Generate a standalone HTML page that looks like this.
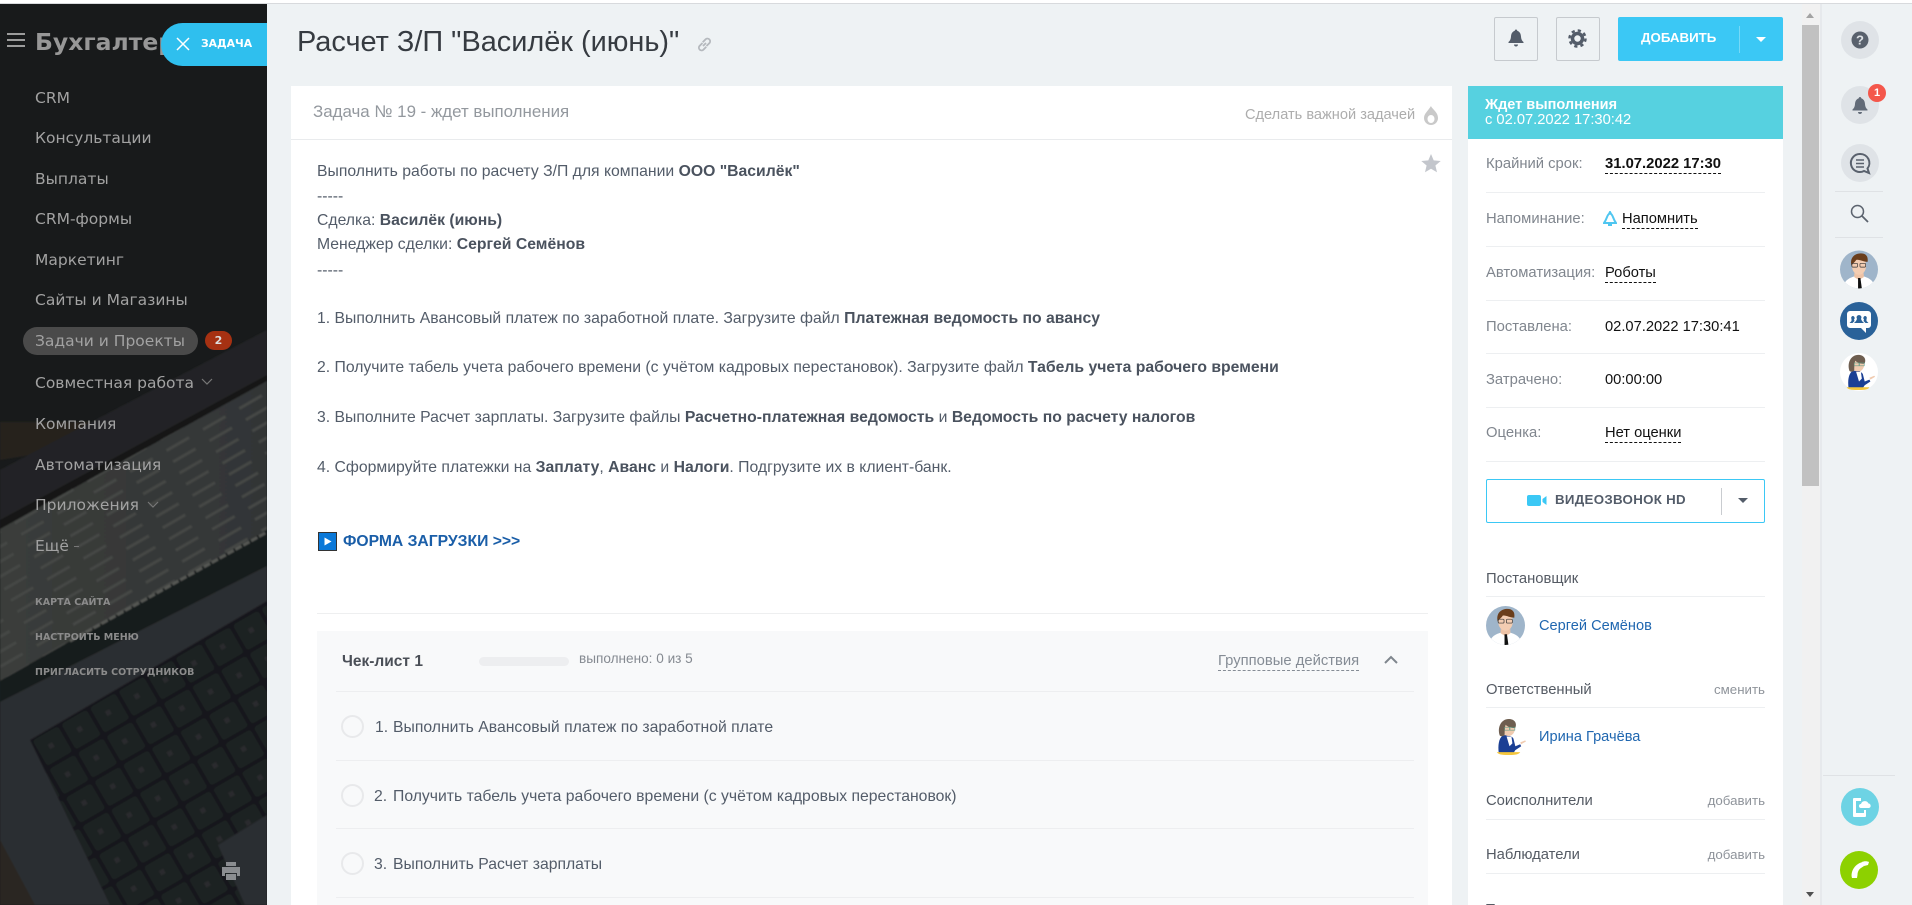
<!DOCTYPE html>
<html lang="ru"><head><meta charset="utf-8"><title>Расчет З/П</title>
<style>
html,body{margin:0;padding:0;width:1912px;height:905px;overflow:hidden;background:#fff}
body{font-family:"Liberation Sans","Noto Sans CJK SC",sans-serif;position:relative}
div,span.t,svg.a{position:absolute}
.t{position:absolute;white-space:nowrap;line-height:1.2}
.m{font-family:"DejaVu Sans",sans-serif;font-size:15.5px;color:#a2a2a2;left:35px;height:18px;line-height:18px}
.s{font-family:"DejaVu Sans",sans-serif;font-size:9.5px;font-weight:bold;color:#8b8b8b;left:35px;height:12px;line-height:12px}
.b{font-size:15.75px;color:#535c69;left:317px;height:18px;line-height:18px}
.b b{color:#4a525e}
.l{font-size:14.8px;color:#80868e;left:1486px;height:18px;line-height:18px}
.v{font-size:14.7px;color:#111;left:1604px;height:18px;line-height:18px}
.u{border-bottom:1px dashed #111;line-height:16px;height:17px}
.h{height:1px;background:#edeff1;left:1486px;width:279px}
.n{font-size:14.8px;color:#555b64;left:1486px;height:18px;line-height:18px}
.r{font-size:13.3px;color:#8f949b;right:147px;height:18px;line-height:18px}
.lnk{font-size:14.6px;color:#2067b0;height:18px;line-height:18px}
.ci{width:38px;height:38px;border-radius:50%;background:#dfe3e7}
.ck{font-size:15.75px;color:#535c69;height:18px;line-height:18px}
.ck span{display:inline-block;width:18px}
.cc{width:19px;height:19px;border-radius:50%;border:2px solid #e8e9eb;background:#f8f9fa;left:341px}
.ch{height:1px;background:#edeef0;left:336px;width:1078px}
</style></head><body>
<svg width="0" height="0" style="position:absolute"><defs>
<symbol id="man" viewBox="0 0 40 40">
<clipPath id="cm"><circle cx="20" cy="20" r="20"/></clipPath>
<g clip-path="url(#cm)"><rect width="40" height="40" fill="#9fb5ca"/>
<path d="M3 40c1-8 6-11 13-13h8c7 2 12 5 13 13z" fill="#fff"/>
<path d="M15 24h10v4l-5 3-5-3z" fill="#eec3a6"/>
<ellipse cx="20" cy="16" rx="7.500" ry="9.500" fill="#f3cdb2"/>
<path d="M12 16c-2-9 4-13 10-13 5 0 8 3 7 9-5 0-9-3-12-2-1 2-3 3-5 6z" fill="#6a3e1c"/>
<rect x="12.500" y="13.500" width="6" height="4" rx="1" fill="none" stroke="#333" stroke-width=".7"/><rect x="21" y="13.500" width="6" height="4" rx="1" fill="none" stroke="#333" stroke-width=".7"/>
<path d="M19 29h2.500l1.500 11h-4z" fill="#111"/></g></symbol>
<symbol id="wom" viewBox="0 0 40 40">
<circle cx="20" cy="20" r="20" fill="#fff"/>
<path d="M9 37c-1-8 0-15 4-18 4-1 9 0 11 3l2 8 5-2 1 2-6 4-2 3z" fill="#1b3f94"/>
<path d="M17 20l5 0 1 7-3 3z" fill="#fff"/>
<ellipse cx="19" cy="12" rx="6.500" ry="7.500" fill="#f0cbb0"/>
<path d="M10 19c-3-9 2-17 9-17 6 0 9 4 7 9-4 1-8-1-10-3-1 3-1 7-1 11-2 1-4 1-5 0z" fill="#6e5e50"/>
<rect x="15" y="10.500" width="5" height="3" fill="none" stroke="#5a9a86" stroke-width=".6"/><rect x="20.500" y="10.500" width="5" height="3" fill="none" stroke="#5a9a86" stroke-width=".6"/>
<path d="M7 36h24c-1 2-4 3-12 3s-11-1-12-3z" fill="#f4c63d"/>
<path d="M31 26l5-2 1 1-5 3z" fill="#f0cbb0"/></symbol>
<symbol id="bell" viewBox="0 0 20 20"><path d="M10 1.500c.8 0 1.200.5 1.200 1.300 2.500.8 3.600 3 3.800 5.700.2 2.800 1 4.300 2.500 5.500v1H2.500v-1C4 12.800 4.800 11.300 5 8.500c.2-2.700 1.300-4.900 3.800-5.700 0-.8.400-1.300 1.200-1.300zM8 16.500h4c0 1.200-.9 2-2 2s-2-.8-2-2z"/></symbol>
<pattern id="keys" width="33" height="33" patternUnits="userSpaceOnUse" patternTransform="translate(30 740) rotate(-30)"><rect width="33" height="33" fill="#16171a"/><rect x="2" y="2" width="29" height="29" rx="3" fill="#1f2124"/><rect x="13" y="13" width="5" height="5" fill="#292b2d"/></pattern>
<pattern id="cells" width="42" height="13" patternUnits="userSpaceOnUse" patternTransform="rotate(-30)"><rect x="3" y="4" width="26" height="3" fill="#444644"/></pattern>
<linearGradient id="sh" x1="0" x2="1" y1="0" y2="0"><stop offset="0" stop-color="#3a3c3a"/><stop offset="1" stop-color="#323536"/></linearGradient>
<filter id="bl"><feGaussianBlur stdDeviation=".9"/></filter>
</defs></svg>

<!-- page bg -->
<div style="left:0;top:0;width:1912px;height:3px;background:#fff"></div>
<div style="left:0;top:3px;width:1912px;height:1px;background:#d8dadd"></div>
<div style="left:267px;top:4px;width:1645px;height:901px;background:#eef2f4"></div>

<!-- sidebar -->
<svg class="a" style="left:0;top:4px;overflow:hidden" width="267" height="901" viewBox="0 4 267 901">
<rect x="0" y="0" width="267" height="905" fill="#181a1b"/>
<g filter="url(#bl)">
<polygon points="0,422 110,422 110,442 0,460" fill="#25211e"/>
<polygon points="0,470 267,330 267,375 0,520" fill="#222425"/>
<polygon points="0,520 267,375 267,381 0,529" fill="#131415"/>
<polygon points="0,529 267,381 267,530 0,681" fill="url(#sh)"/>
<polygon points="0,529 267,381 267,530 0,681" fill="url(#cells)"/>
<polygon points="0,681 267,530 267,566 0,702" fill="#191a1b"/>
<line x1="70" y1="641" x2="267" y2="532" stroke="#545653" stroke-width="3" stroke-dasharray="7 2"/>
<polygon points="0,702 267,566 267,905 0,905" fill="#2a2d30"/>
<polygon points="30,740 267,601 267,905 110,905" fill="url(#keys)"/>
<polygon points="267,815 218,845 245,905 267,905" fill="#2a2d30"/>
<polygon points="0,840 35,905 0,905" fill="#2c2622"/>
</g>
</svg>
<div class="t" style="left:35px;top:24px;font-family:'DejaVu Sans',sans-serif;font-weight:bold;font-size:23.500px;color:#979797;line-height:36px">Бухгалтер 24</div>
<div style="left:7px;top:33px;width:18px;height:2px;background:#9c9c9c"></div>
<div style="left:7px;top:39px;width:18px;height:2px;background:#9c9c9c"></div>
<div style="left:7px;top:45px;width:18px;height:2px;background:#9c9c9c"></div>
<div style="left:161px;top:23px;width:106px;height:43px;background:#2fbfee;border-radius:22px 0 0 22px"></div>
<svg class="a" style="left:176px;top:37px" width="14" height="14"><path d="M1 1l12 12M13 1L1 13" stroke="#fff" stroke-width="1.500"/></svg>
<div class="t" style="left:201px;top:36px;font-family:'DejaVu Sans',sans-serif;font-size:10.800px;font-weight:bold;color:#fff;line-height:16px">ЗАДАЧА</div>
<div class="t m" style="top:89px">CRM</div>
<div class="t m" style="top:129px">Консультации</div>
<div class="t m" style="top:170px">Выплаты</div>
<div class="t m" style="top:210px">CRM-формы</div>
<div class="t m" style="top:251px">Маркетинг</div>
<div class="t m" style="top:291px">Сайты и Магазины</div>
<div style="left:23px;top:327px;width:175px;height:28px;border-radius:14px;background:#4a4a4a"></div>
<div class="t m" style="top:332px">Задачи и Проекты</div>
<div class="t" style="left:205px;top:331px;width:27px;height:19px;border-radius:10px;background:#a63112;color:#dcdcdc;font-family:'DejaVu Sans',sans-serif;font-weight:bold;font-size:11px;line-height:19px;text-align:center">2</div>
<div class="t m" style="top:374px">Совместная работа</div>
<svg class="a" style="left:201px;top:378px" width="12" height="8"><path d="M1 1l5 5 5-5" fill="none" stroke="#777" stroke-width="1.200"/></svg>
<div class="t m" style="top:415px">Компания</div>
<div class="t m" style="top:456px">Автоматизация</div>
<div class="t m" style="top:496px">Приложения</div>
<svg class="a" style="left:147px;top:501px" width="12" height="8"><path d="M1 1l5 5 5-5" fill="none" stroke="#777" stroke-width="1.200"/></svg>
<div class="t m" style="top:537px">Ещё</div>
<div style="left:74px;top:546px;width:5px;height:1px;background:#777"></div>
<div class="t s" style="top:597px">КАРТА САЙТА</div>
<div class="t s" style="top:632px">НАСТРОИТЬ МЕНЮ</div>
<div class="t s" style="top:667px">ПРИГЛАСИТЬ СОТРУДНИКОВ</div>
<svg class="a" style="left:221px;top:861px" width="20" height="20" viewBox="0 0 20 20"><path d="M5 1h10v4H5zM1 6h18v9h-3v-3H4v3H1zM5 13h10v6H5z" fill="#8a8d90"/></svg>

<!-- title -->
<div class="t" style="left:297px;top:22px;font-size:28.900px;color:#363b41;line-height:40px">Расчет З/П "Василёк (июнь)"</div>
<svg class="a" style="left:696px;top:36px" width="17" height="17" viewBox="0 0 17 17"><path d="M7 10l3-3M6.500 7L3.500 10a2.700 2.700 0 0 0 3.800 3.800l3-3M10.500 10l3-3a2.700 2.700 0 0 0-3.800-3.800l-3 3" fill="none" stroke="#b5b9be" stroke-width="1.800"/></svg>

<!-- main card -->
<div style="left:291px;top:86px;width:1161px;height:819px;background:#fff"></div>
<div style="left:291px;top:139px;width:1161px;height:1px;background:#e9ebed"></div>
<div class="t" style="left:313px;top:102px;font-size:16.900px;color:#93989e;line-height:20px">Задача № 19 - ждет выполнения</div>
<div class="t" style="left:1245px;top:106px;font-size:14.600px;color:#adadad;line-height:18px">Сделать важной задачей</div>
<svg class="a" style="left:1423px;top:105px" width="16" height="20" viewBox="0 0 16 20"><path d="M8 1c1 3 7 6 7 12a7 7 0 0 1-14 0C1 9 4 7 8 1z" fill="#c9c9c9"/><ellipse cx="8" cy="14" rx="3.500" ry="4" fill="#fff"/></svg>
<svg class="a" style="left:1421px;top:154px" width="20" height="19" viewBox="0 0 20 19"><path d="M10 0l2.700 6.400 7 .6-5.300 4.500 1.600 6.800L10 14.700l-6 3.600 1.600-6.800L.3 7l7-.6z" fill="#c3c6cc"/></svg>

<div class="t b" style="top:163px">Выполнить работы по расчету З/П для компании <b>ООО "Василёк"</b></div>
<div class="t b" style="top:188px">-----</div>
<div class="t b" style="top:212px">Сделка: <b>Василёк (июнь)</b></div>
<div class="t b" style="top:236px">Менеджер сделки: <b>Сергей Семёнов</b></div>
<div class="t b" style="top:262px">-----</div>
<div class="t b" style="top:310px">1. Выполнить Авансовый платеж по заработной плате. Загрузите файл <b>Платежная ведомость по авансу</b></div>
<div class="t b" style="top:359px">2. Получите табель учета рабочего времени (с учётом кадровых перестановок). Загрузите файл <b>Табель учета рабочего времени</b></div>
<div class="t b" style="top:409px">3. Выполните Расчет зарплаты. Загрузите файлы <b>Расчетно-платежная ведомость</b> и <b>Ведомость по расчету налогов</b></div>
<div class="t b" style="top:459px">4. Сформируйте платежки на <b>Заплату</b>, <b>Аванс</b> и <b>Налоги</b>. Подгрузите их в клиент-банк.</div>
<svg class="a" style="left:318px;top:532px" width="19" height="19" viewBox="0 0 19 19"><rect x=".5" y=".5" width="18" height="18" fill="#0a78d8" stroke="#333"/><path d="M6.500 5.500l7 4-7 4z" fill="#fff"/></svg>
<div class="t" style="left:343px;top:533px;font-size:15.700px;font-weight:bold;color:#1a5ea8;line-height:18px">ФОРМА ЗАГРУЗКИ &gt;&gt;&gt;</div>
<div style="left:317px;top:613px;width:1111px;height:1px;background:#eeeff0"></div>

<!-- checklist -->
<div style="left:317px;top:631px;width:1111px;height:274px;background:#f8f9fa"></div>
<div class="t" style="left:342px;top:653px;font-size:15.500px;font-weight:bold;color:#4a4f57;line-height:18px">Чек-лист 1</div>
<div style="left:479px;top:657px;width:90px;height:9px;border-radius:5px;background:#edeef0"></div>
<div class="t" style="left:579px;top:651px;font-size:13.600px;color:#858a91;line-height:16px">выполнено: 0 из 5</div>
<div class="t" style="left:1218px;top:652px;font-size:14.800px;color:#858c95;line-height:18px;height:18px;border-bottom:1px dashed #858c95">Групповые действия</div>
<svg class="a" style="left:1384px;top:655px" width="14" height="10"><path d="M1 8l6-6 6 6" fill="none" stroke="#7f868d" stroke-width="2"/></svg>
<div class="ch" style="top:691px"></div>
<div class="cc" style="top:715px"></div>
<div class="t ck" style="left:375px;top:719px"><span>1.</span>Выполнить Авансовый платеж по заработной плате</div>
<div class="ch" style="top:760px"></div>
<div class="cc" style="top:784px"></div>
<div class="t ck" style="left:374px;top:788px"><span style="width:19px">2.</span>Получить табель учета рабочего времени (с учётом кадровых перестановок)</div>
<div class="ch" style="top:828px"></div>
<div class="cc" style="top:852px"></div>
<div class="t ck" style="left:374px;top:856px"><span style="width:19px">3.</span>Выполнить Расчет зарплаты</div>
<div class="ch" style="top:897px"></div>

<!-- top buttons -->
<div style="left:1494px;top:17px;width:42px;height:42px;border:1px solid #c6cace;border-radius:2px"></div>
<svg class="a" style="left:1506px;top:28px;fill:#535c69" width="20" height="20"><use href="#bell"/></svg>
<div style="left:1556px;top:17px;width:42px;height:42px;border:1px solid #c6cace;border-radius:2px"></div>
<svg class="a" style="left:1568px;top:29px" width="19" height="19" viewBox="0 0 19 19"><circle cx="9.500" cy="9.500" r="5" fill="none" stroke="#535c69" stroke-width="3.500"/><circle cx="9.500" cy="9.500" r="8" fill="none" stroke="#535c69" stroke-width="2.500" stroke-dasharray="3.200 3.080"/></svg>
<div style="left:1618px;top:17px;width:165px;height:44px;background:#3bc8f5;border-radius:2px"></div>
<div class="t" style="left:1641px;top:30px;font-size:13.300px;font-weight:bold;color:#fff;line-height:16px">ДОБАВИТЬ</div>
<div style="left:1739px;top:26px;width:1px;height:27px;background:#76d9f8"></div>
<div style="left:1756px;top:37px;width:0;height:0;border:5px solid transparent;border-top:5px solid #fff;border-bottom:0"></div>

<!-- right panel -->
<div style="left:1468px;top:86px;width:315px;height:819px;background:#fff"></div>
<div style="left:1468px;top:86px;width:315px;height:53px;background:#56d1e0"></div>
<div class="t" style="left:1485px;top:97px;font-size:14.500px;font-weight:bold;color:#fff;line-height:16px">Ждет выполнения</div>
<div class="t" style="left:1485px;top:112px;font-size:14.700px;color:#fff;line-height:17px">с 02.07.2022 17:30:42</div>

<div class="t l" style="top:155px">Крайний срок:</div>
<div class="t v u" style="left:1605px;top:156px;font-weight:bold;font-size:14.800px">31.07.2022 17:30</div>
<div class="h" style="top:192px"></div>
<div class="t l" style="top:210px">Напоминание:</div>
<svg class="a" style="left:1603px;top:211px" width="14" height="15" viewBox="0 0 14 15"><path d="M7 1l1 2c2 1 2 5 5 9H1c3-4 3-8 5-9z" fill="none" stroke="#4fc6f0" stroke-width="2"/><path d="M5 13h4v2H5z" fill="#4fc6f0"/></svg>
<div class="t v u" style="left:1622px;top:211px">Напомнить</div>
<div class="h" style="top:246px"></div>
<div class="t l" style="top:264px">Автоматизация:</div>
<div class="t v u" style="left:1605px;top:265px">Роботы</div>
<div class="h" style="top:300px"></div>
<div class="t l" style="top:318px">Поставлена:</div>
<div class="t v" style="left:1605px;top:318px">02.07.2022 17:30:41</div>
<div class="h" style="top:353px"></div>
<div class="t l" style="top:371px">Затрачено:</div>
<div class="t v" style="left:1605px;top:371px">00:00:00</div>
<div class="h" style="top:407px"></div>
<div class="t l" style="top:424px">Оценка:</div>
<div class="t v u" style="left:1605px;top:425px">Нет оценки</div>
<div class="h" style="top:461px"></div>

<div style="left:1486px;top:479px;width:277px;height:42px;border:1px solid #3bc8f5;border-radius:2px"></div>
<svg class="a" style="left:1527px;top:495px" width="20" height="11" viewBox="0 0 20 11"><rect width="14" height="11" rx="2" fill="#3bc8f5"/><path d="M15.500 4l4-3v9l-4-3z" fill="#3bc8f5"/></svg>
<div class="t" style="left:1555px;top:492px;font-size:13.300px;font-weight:bold;color:#535c69;line-height:16px;letter-spacing:.3px">ВИДЕОЗВОНОК HD</div>
<div style="left:1721px;top:488px;width:1px;height:27px;background:#c9ccd0"></div>
<div style="left:1738px;top:498px;width:0;height:0;border:5px solid transparent;border-top:5px solid #535c69;border-bottom:0"></div>

<div class="t n" style="top:570px">Постановщик</div>
<div class="h" style="top:596px"></div>
<svg class="a" style="left:1486px;top:606px" width="39" height="39"><use href="#man"/></svg>
<div class="t lnk" style="left:1539px;top:617px">Сергей Семёнов</div>
<div class="t n" style="top:681px">Ответственный</div>
<div class="t r" style="top:681px">сменить</div>
<div class="h" style="top:707px"></div>
<svg class="a" style="left:1490px;top:717px" width="39" height="39"><use href="#wom"/></svg>
<div class="t lnk" style="left:1539px;top:728px">Ирина Грачёва</div>
<div class="t n" style="top:792px">Соисполнители</div>
<div class="t r" style="top:792px">добавить</div>
<div class="h" style="top:819px"></div>
<div class="t n" style="top:846px">Наблюдатели</div>
<div class="t r" style="top:846px">добавить</div>
<div class="h" style="top:873px"></div>
<div class="t n" style="top:901px">Теги</div>

<!-- scrollbar -->
<div style="left:1802px;top:4px;width:18px;height:901px;background:#f1f1f1"></div>
<div style="left:1802px;top:25px;width:17px;height:461px;background:#c1c1c1"></div>
<div style="left:1806px;top:13px;width:0;height:0;border:4.500px solid transparent;border-bottom:5px solid #a3a3a3;border-top:0"></div>
<div style="left:1806px;top:892px;width:0;height:0;border:4.500px solid transparent;border-top:5px solid #505050;border-bottom:0"></div>
<div style="left:1820px;top:4px;width:2px;height:901px;background:#e6e9ec"></div>

<!-- right rail -->
<div class="ci" style="left:1841px;top:21px"></div>
<svg class="a" style="left:1851px;top:31px" width="18" height="18" viewBox="0 0 18 18"><circle cx="9" cy="9" r="8.500" fill="#59616d"/><text x="9" y="13.500" text-anchor="middle" font-family="Liberation Sans,sans-serif" font-size="13" font-weight="bold" fill="#dfe3e7">?</text></svg>
<div class="ci" style="left:1841px;top:86px"></div>
<svg class="a" style="left:1850px;top:95px;fill:#626b78" width="20" height="21"><use href="#bell"/></svg>
<div class="t" style="left:1868px;top:84px;width:18px;height:18px;border-radius:50%;background:#f4574b;color:#fff;font-size:11px;font-weight:bold;line-height:18px;text-align:center">1</div>
<div class="ci" style="left:1841px;top:144px"></div>
<svg class="a" style="left:1849px;top:152px" width="23" height="23" viewBox="0 0 23 23"><path d="M11 2a9 9 0 1 0 4 17l5 2-1.500-4.500A9 9 0 0 0 11 2z" fill="none" stroke="#59616d" stroke-width="2"/><path d="M7 8h8M7 11.500h8M7 15h8" stroke="#59616d" stroke-width="1.500"/></svg>
<div style="left:1835px;top:191px;width:48px;height:1px;background:#dfe2e5"></div>
<svg class="a" style="left:1850px;top:204px" width="19" height="19" viewBox="0 0 19 19"><circle cx="7.500" cy="7.500" r="6" fill="none" stroke="#5b636e" stroke-width="1.500"/><path d="M12 12l6 6" stroke="#5b636e" stroke-width="1.800"/></svg>
<div style="left:1835px;top:237px;width:48px;height:1px;background:#dfe2e5"></div>
<svg class="a" style="left:1840px;top:250px" width="38" height="39"><use href="#man"/></svg>
<div style="left:1840px;top:302px;width:38px;height:38px;border-radius:50%;background:#2a6299"></div>
<svg class="a" style="left:1846px;top:310px" width="26" height="24" viewBox="0 0 26 24"><path d="M4 1h18a3 3 0 0 1 3 3v11a3 3 0 0 1-3 3h-2v5l-5-5H4a3 3 0 0 1-3-3V4a3 3 0 0 1 3-3z" fill="#fff"/><path d="M13 5a2.500 2.500 0 0 1 2 4l1 2 2 2H8l2-2 1-2a2.500 2.500 0 0 1 2-4zM6.500 6a2 2 0 0 1 1.500 3.500l.5 1.500-2 2H3.500l2-2 0-2a2 2 0 0 1 1-3zM19.500 6a2 2 0 0 1 1 3l0 2 2 2h-3l-2-2 .5-1.500A2 2 0 0 1 19.500 6z" fill="#2a6299"/></svg>
<svg class="a" style="left:1840px;top:353px" width="38" height="38"><use href="#wom"/></svg>
<div style="left:1823px;top:775px;width:72px;height:1px;background:#dfe2e5"></div>
<div style="left:1841px;top:788px;width:38px;height:38px;border-radius:50%;background:#6dd3e4"></div>
<svg class="a" style="left:1852px;top:797px" width="20" height="20" viewBox="0 0 20 20"><path d="M2 1h7v3H4v12h8v-3h2v6a1 1 0 0 1-1 1H2a1 1 0 0 1-1-1V2a1 1 0 0 1 1-1z" fill="#fff"/><path d="M9 11a2 2 0 0 1 0-4 4 4 0 0 1 7.500-.5 2.300 2.300 0 0 1 .5 4.500z" fill="#fff"/></svg>
<div style="left:1840px;top:851px;width:38px;height:38px;border-radius:50%;background:#8dd100"></div>
<svg class="a" style="left:1850px;top:860px" width="20" height="20" viewBox="0 0 20 20"><path d="M2 18C0 11 6 3 13 2l1 4-3 2c-2 1-3.500 4-3.500 7L7 18z" fill="#fff"/><path d="M12 2c2-1 5-1 7 0l-1 3-4 1z" fill="#fff"/></svg>
</body></html>
